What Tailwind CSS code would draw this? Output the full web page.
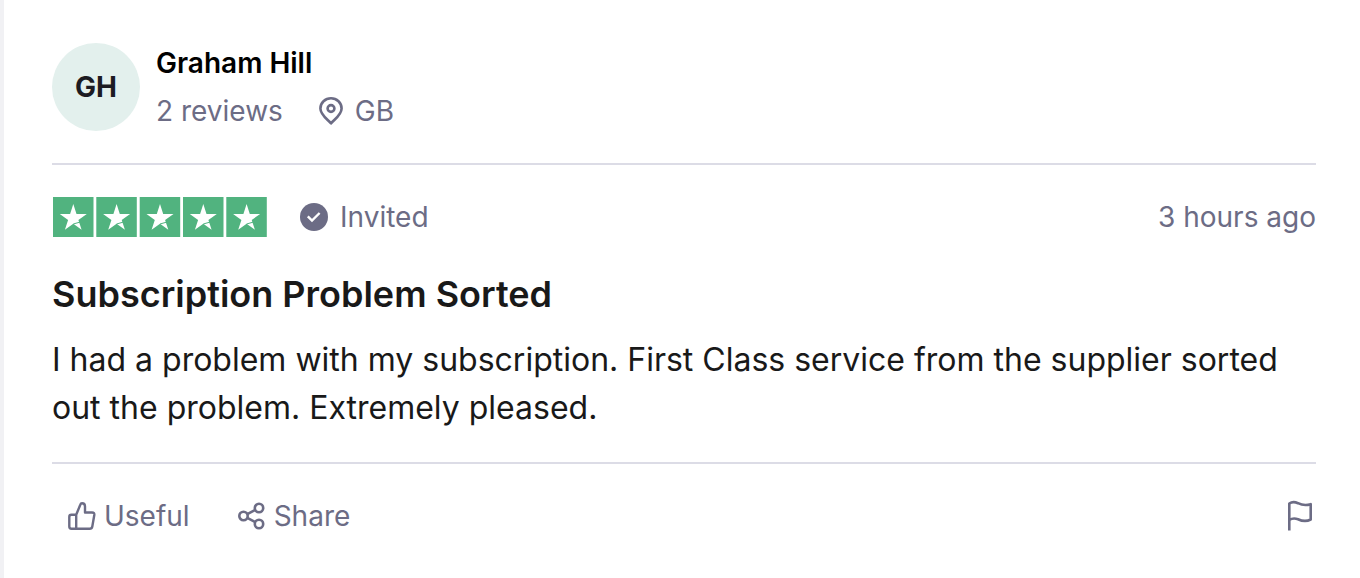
<!DOCTYPE html>
<html lang="en">
<head>
  <meta charset="UTF-8">
  <meta name="viewport" content="width=device-width, initial-scale=1.0">
  <title>Review by Graham Hill</title>
  <!-- Tailwind CSS -->
  <script src="https://cdn.jsdelivr.net/npm/@tailwindcss/browser@4"></script>
</head>
<body class="min-h-screen bg-white border-l-4 border-[#f1f1f4] font-['Inter','Liberation_Sans',sans-serif] text-[28px] leading-9 text-[#6c6c85]">
  <article class="px-12 pr-11 pt-[43px]">
    <!-- Reviewer -->
    <header class="flex items-center gap-4 pb-8 border-b-2 border-[#dcdce6]">
      <div class="flex items-center justify-center size-22 shrink-0 rounded-full bg-[#e3f0ed] font-bold text-[#1c1b22]">GH</div>
      <div>
        <a href="#" class="block w-fit leading-10 font-semibold text-black">Graham Hill</a>
        <div class="flex items-center gap-9 pt-2 leading-10">
          <span>2 reviews</span>
          <span class="flex items-center gap-3">
            <svg class="w-6 h-7" viewBox="0 0 24 28" fill="none" stroke="currentColor" stroke-width="2.6" stroke-linejoin="round">
              <path d="M12 26.4C8 22 1.4 17.5 1.4 11.4a10.6 10.1 0 0 1 21.2 0C22.6 17.5 16 22 12 26.4Z"/>
              <circle cx="12" cy="11.5" r="3.4"/>
            </svg>
            GB
          </span>
        </div>
      </div>
    </header>

    <section>
      <!-- Rating -->
      <div class="flex items-center justify-between pt-8">
        <div class="flex items-center gap-8">
          <svg class="w-[216px] h-10" viewBox="0 0 216 40" role="img" aria-label="Rated 5 out of 5 stars">
            <defs>
              <g id="star">
                <path fill="#51b37f" d="M0 0h40.5v40H0z"/>
                <path fill="#fff" d="M20.3 7l3.2 9.9h10.3l-8.4 6.1 3.2 9.8-8.3-6.1-8.4 6.1 3.200-9.800L6.800 16.900h10.300z"/>
                <path fill="none" stroke="#51b37f" stroke-width="1" d="M20.300 27L27 25.100"/>
              </g>
            </defs>
            <use href="#star" x="1"/>
            <use href="#star" x="44.3"/>
            <use href="#star" x="87.7"/>
            <use href="#star" x="131"/>
            <use href="#star" x="174.3"/>
          </svg>
          <span class="flex items-center gap-3">
            <svg class="size-7" viewBox="0 0 28 28">
              <circle cx="14" cy="14" r="14" fill="currentColor"/>
              <path d="M7.8 13.4l4.2 4.2 7.600-7.600" fill="none" stroke="#fff" stroke-width="2.4"/>
            </svg>
            Invited
          </span>
        </div>
        <time>3 hours ago</time>
      </div>

      <!-- Review text -->
      <h2 class="pt-[31px] text-[36px] leading-[52px] font-semibold text-[#191919]">Subscription Problem Sorted</h2>
      <p class="pt-4 pb-[30px] text-[32px] leading-12 text-[#191919]">I had a problem with my subscription. First Class service from the supplier sorted out the problem. Extremely pleased.</p>
    </section>

    <!-- Actions -->
    <footer class="flex items-center justify-between border-t-2 border-[#dcdce6] pt-[34px] pl-4">
      <div class="flex items-center gap-12">
        <button type="button" class="flex items-center gap-2">
          <svg class="size-7" viewBox="0 0 28 28" fill="none" stroke="currentColor" stroke-width="2.4" stroke-linejoin="round">
            <path d="M8.200 12.800H3.400Q1.300 12.800 1.300 14.900V24.500Q1.300 26.700 3.400 26.700H21.600Q23.900 26.700 24.300 24.500L26.300 13Q26.600 10.500 24.100 10.500H17V4.500Q17 1.300 14 1.300 12.800 1.300 12.300 2.700L8.200 12.800V26.700"/>
          </svg>
          Useful
        </button>
        <button type="button" class="flex items-center gap-2">
          <svg class="size-7" viewBox="0 0 28 28" fill="none" stroke="currentColor" stroke-width="2.6">
            <circle cx="5.500" cy="14" r="4.200"/>
            <circle cx="21" cy="6" r="4.200"/>
            <circle cx="21" cy="22" r="4.200"/>
            <path d="M9.300 12.100l8-4.200M9.300 15.900l8 4.200"/>
          </svg>
          Share
        </button>
      </div>
      <button type="button" aria-label="Report review">
        <svg class="w-8 h-9" viewBox="0 0 32 36" fill="none" stroke="currentColor" stroke-width="2.6" stroke-linejoin="round">
          <path d="M5.300 32.500V5.500Q9 3 14 5.200 20 8.200 26.700 6.200V21.500Q21 24.500 14 21.200 9 19.500 5.300 22"/>
        </svg>
      </button>
    </footer>
  </article>
</body>
</html>
